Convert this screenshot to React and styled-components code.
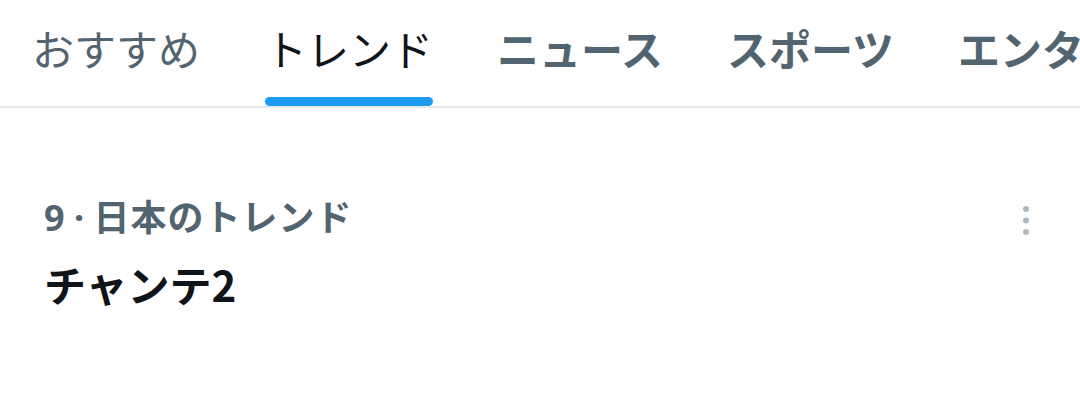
import React from "react";
import styled, { createGlobalStyle } from "styled-components";

const GlobalStyle = createGlobalStyle`
  html, body {
    margin: 0;
    padding: 0;
    background: #ffffff;
    font-family: "Noto Sans CJK JP", "Noto Sans", sans-serif;
  }
`;

const tabs = [
  { label: "おすすめ", weight: 400 },
  { label: "トレンド", weight: 400, active: true },
  { label: "ニュース", weight: 700 },
  { label: "スポーツ", weight: 700 },
  { label: "エンターテイメント", weight: 700 },
];

export default function App() {
  return (
    <Page>
      <GlobalStyle />
      <TabBar>
        {tabs.map((t) => (
          <Tab key={t.label} $active={t.active} $weight={t.weight}>
            <TabLabel>
              {t.label}
              {t.active && <Indicator />}
            </TabLabel>
          </Tab>
        ))}
      </TabBar>
      <TrendItem>
        <TrendText>
          <TrendMeta>
            <Latin>9 · </Latin>日本のトレンド
          </TrendMeta>
          <TrendTitle>チャンテ2</TrendTitle>
        </TrendText>
        <MoreButton aria-label="more">
          <svg width="12" height="34" viewBox="0 0 12 34">
            <circle cx="6" cy="5" r="3" fill="#aab8c2" />
            <circle cx="6" cy="16.5" r="3" fill="#aab8c2" />
            <circle cx="6" cy="28" r="3" fill="#aab8c2" />
          </svg>
        </MoreButton>
      </TrendItem>
    </Page>
  );
}

const Page = styled.div`
  width: 1080px;
  height: 402px;
  overflow: hidden;
  background: #ffffff;
`;

const TabBar = styled.div`
  display: flex;
  height: 106px;
  border-bottom: 2px solid #e6e9eb;
  white-space: nowrap;
  overflow: hidden;
`;

const Tab = styled.div`
  flex: none;
  display: flex;
  padding: 0 32px;
  font-size: 42px;
  font-weight: ${(p) => p.$weight};
  color: ${(p) => (p.$active ? "#0f1419" : "#536471")};
  &:first-child {
    padding-left: 32px;
    padding-right: 33px;
  }
`;

const TabLabel = styled.div`
  position: relative;
  display: flex;
  align-items: center;
  height: 100%;
  padding-bottom: 10px;
  box-sizing: border-box;
  line-height: 1;
`;

const Indicator = styled.div`
  position: absolute;
  left: 0;
  right: 0;
  bottom: 0;
  height: 9px;
  border-radius: 5px;
  background: #1d9bf0;
`;

const TrendItem = styled.div`
  display: flex;
  justify-content: space-between;
  align-items: flex-start;
  padding: 86px 48px 0 44px;
`;

const TrendText = styled.div`
  display: flex;
  flex-direction: column;
  gap: 20px;
`;

const TrendMeta = styled.div`
  font-size: 36px;
  font-weight: 700;
  letter-spacing: 1px;
  color: #536471;
  line-height: 1.2;
`;

const Latin = styled.span`
  font-family: "Noto Sans", sans-serif;
  letter-spacing: 0;
  white-space: pre;
`;

const TrendTitle = styled.div`
  font-size: 42px;
  font-weight: 700;
  color: #0f1419;
  line-height: 1.2;
`;

const MoreButton = styled.div`
  margin-top: 10px;
  display: flex;
`;
